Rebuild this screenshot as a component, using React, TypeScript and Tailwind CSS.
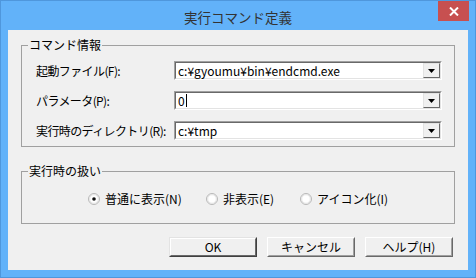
import React from "react";

const font = { fontFamily: '"Noto Sans CJK JP", "Liberation Sans", sans-serif' };

const ComboBox = ({ value, caret }: { value: string; caret?: boolean }) => (
  <div className="w-[268px] h-[19px] shrink-0 border border-t-[#a0a0a0] border-l-[#a0a0a0] border-b-white border-r-white">
    <div className="h-full border border-t-[#696969] border-l-[#696969] border-b-[#e3e3e3] border-r-[#e3e3e3] bg-white flex items-center">
      <span className="flex-1 pl-[2px] text-[12px] leading-[15px] text-black flex items-center">
        {value}
        {caret && <span className="inline-block w-px h-[13px] bg-black ml-[1px]" />}
      </span>
      {/* drop button */}
      <div className="w-[17px] h-[15px] border border-t-[#e3e3e3] border-l-[#e3e3e3] border-b-[#696969] border-r-[#696969] bg-[#f0f0f0] flex items-center justify-center">
        <svg width="7" height="4" viewBox="0 0 7 4">
          <path d="M0 0h7L3.5 4z" fill="#000" />
        </svg>
      </div>
    </div>
  </div>
);

const Radio = ({ checked, label, w }: { checked?: boolean; label: string; w: string }) => (
  <div className={`flex items-center gap-[5px] ${w}`}>
    <svg width="12" height="12" viewBox="0 0 12 12">
      <circle cx="6" cy="6" r="5.5" fill="#f4f4f4" stroke="#b8b8b8" />
      <circle cx="6" cy="6" r="4.3" fill="#fff" stroke="#dedede" strokeWidth="0.8" />
      {checked && <circle cx="6" cy="6" r="1.8" fill="#111" />}
    </svg>
    <span className="text-[12px] leading-[14px] text-black whitespace-nowrap">{label}</span>
  </div>
);

const Button = ({ label, isDefault }: { label: string; isDefault?: boolean }) => (
  <div
    className={`w-[88px] h-[20px] border ${
      isDefault
        ? "border-t-[#e3e3e3] border-l-[#e3e3e3] border-b-[#404040] border-r-[#404040]"
        : "border-t-white border-l-white border-b-[#696969] border-r-[#696969]"
    }`}
  >
    <div
      className={`h-full border ${
        isDefault
          ? "border-t-white border-l-white border-b-[#696969] border-r-[#696969]"
          : "border-t-[#f0f0f0] border-l-[#f0f0f0] border-b-[#a0a0a0] border-r-[#a0a0a0]"
      } bg-[#f0f0f0] flex items-center justify-center text-[12px] leading-[14px] text-black`}
    >
      {label}
    </div>
  </div>
);

const labelCls = "w-[138px] shrink-0 whitespace-nowrap text-[12px] leading-[14px] text-black tracking-[-0.6px]";

export default function App() {
  return (
    <div
      className="w-[476px] h-[278px] bg-[#62b2f9] border border-[#4f97dc] flex flex-col"
      style={font}
    >
      {/* Title bar */}
      <div className="relative h-[29px] flex items-center justify-center">
        <span className="text-[13.5px] leading-[16px] text-[#333] mt-[3px]">実行コマンド定義</span>
        <div className="absolute right-[6px] top-0 w-[31px] h-[20px] bg-[#c75050] flex items-center justify-center">
          <svg width="10" height="9" viewBox="0 0 10 9">
            <path d="M1 0.5l8 8M9 0.5l-8 8" stroke="#fff" strokeWidth="2" />
          </svg>
        </div>
      </div>

      {/* Client area */}
      <div className="mx-[7px] h-[240px] bg-[#f0f0f0] flex flex-col">
        {/* コマンド情報 */}
        <div className="relative ml-[13px] mt-[15px] w-[434px] h-[102px] border border-[#a0a0a0]">
          <span className="absolute left-[6px] -top-[8px] px-[1px] bg-[#f0f0f0] text-[12px] leading-[14px] text-black">
            コマンド情報
          </span>
          <div className="pl-[14px] pt-[15px] flex flex-col gap-[11px]">
            <div className="flex items-center h-[19px]">
              <span className={labelCls}>起動ファイル(F):</span>
              <ComboBox value="c:¥gyoumu¥bin¥endcmd.exe" />
            </div>
            <div className="flex items-center h-[19px]">
              <span className={labelCls}>パラメータ(P):</span>
              <ComboBox value="0" caret />
            </div>
            <div className="flex items-center h-[19px]">
              <span className={labelCls}>実行時のディレクトリ(R):</span>
              <ComboBox value="c:¥tmp" />
            </div>
          </div>
        </div>

        {/* 実行時の扱い */}
        <div className="relative ml-[13px] mt-[24px] w-[434px] h-[53px] border border-[#a0a0a0] flex items-center pl-[66px] pt-[3px]">
          <span className="absolute left-[6px] -top-[8px] px-[1px] bg-[#f0f0f0] text-[12px] leading-[14px] text-black">
            実行時の扱い
          </span>
          <Radio checked label="普通に表示(N)" w="w-[118px]" />
          <Radio label="非表示(E)" w="w-[94px]" />
          <Radio label="アイコン化(I)" w="w-[100px]" />
        </div>

        {/* Buttons */}
        <div className="mt-[13px] ml-[161px] flex gap-[10px]">
          <Button label="OK" isDefault />
          <Button label="キャンセル" />
          <Button label="ヘルプ(H)" />
        </div>
      </div>
    </div>
  );
}
